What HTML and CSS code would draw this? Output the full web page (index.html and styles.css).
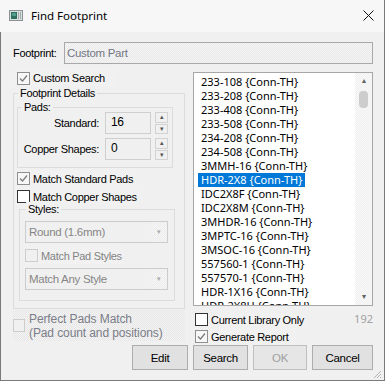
FILE: index.html
```html
<!DOCTYPE html>
<html lang="en">
<head>
<meta charset="UTF-8" />
<title>Find Footprint</title>
<link rel="stylesheet" href="styles.css">
</head>
<body>
<div class="window">
  <div class="titlebar">
    <svg class="app-icon" width="14" height="11" viewBox="0 0 14 11">
      <rect x="0.5" y="0.5" width="13" height="10" fill="#d9dede" stroke="#8c9292"/>
      <rect x="2" y="2" width="6" height="7" fill="#2e6f5e"/>
      <rect x="3" y="3" width="4" height="3" fill="#4f9b8c"/>
      <rect x="9" y="2" width="1" height="7" fill="#a3aaaa"/>
      <rect x="11" y="2" width="1" height="7" fill="#a3aaaa"/>
    </svg>
    <span class="title">Find Footprint</span>
    <svg class="close" width="11" height="11" viewBox="0 0 11 11">
      <path d="M0.5 0.5 L10.5 10.5 M10.5 0.5 L0.5 10.5" stroke="#111" stroke-width="1"/>
    </svg>
  </div>

  <div class="body">
    <div class="fp-row">
      <span class="fp-label">Footprint:</span>
      <div class="field">Custom Part</div>
    </div>

    <div class="columns">
      <div class="left">
        <div class="check-row hatch-light first">
          <span class="cb checked"><svg width="11" height="11" viewBox="0 0 11 11"><path d="M2 5.5 L4.5 8 L9 2.5" fill="none" stroke="#7a7a7a" stroke-width="1.2"/></svg></span>
          <span>Custom Search</span>
        </div>

        <div class="group details">
          <div class="group-title">Footprint Details</div>

          <div class="group pads">
            <div class="group-title">Pads:</div>
            <div class="num-row first">
              <span class="num-label">Standard:</span>
              <div class="num-input">16</div>
              <div class="spin"><span>&#9652;</span><span>&#9662;</span></div>
            </div>
            <div class="num-row">
              <span class="num-label">Copper Shapes:</span>
              <div class="num-input">0</div>
              <div class="spin"><span>&#9652;</span><span>&#9662;</span></div>
            </div>
          </div>

          <div class="check-row hatch-light msp">
            <span class="cb checked"><svg width="11" height="11" viewBox="0 0 11 11"><path d="M2 5.5 L4.5 8 L9 2.5" fill="none" stroke="#7a7a7a" stroke-width="1.2"/></svg></span>
            <span>Match Standard Pads</span>
          </div>
          <div class="check-row hatch-light mcs">
            <span class="cb dark"></span>
            <span>Match Copper Shapes</span>
          </div>

          <div class="group styles">
            <div class="group-title">Styles:</div>
            <div class="combo first">
              <span>Round (1.6mm)</span>
              <span class="combo-arrow">&#9662;</span>
            </div>
            <div class="check-row hatch-light disabled mps">
              <span class="cb off"></span>
              <span>Match Pad Styles</span>
            </div>
            <div class="combo">
              <span>Match Any Style</span>
              <span class="combo-arrow">&#9662;</span>
            </div>
          </div>
        </div>

        <div class="perfect">
          <span class="cb off"></span>
          <span class="perfect-text">Perfect Pads Match<br>(Pad count and positions)</span>
        </div>
      </div>

      <div class="right">
        <div class="list">
          <div class="items">
            <div class="item"><span>233-108 {Conn-TH}</span></div>
            <div class="item"><span>233-208 {Conn-TH}</span></div>
            <div class="item"><span>233-408 {Conn-TH}</span></div>
            <div class="item"><span>233-508 {Conn-TH}</span></div>
            <div class="item"><span>234-208 {Conn-TH}</span></div>
            <div class="item"><span>234-508 {Conn-TH}</span></div>
            <div class="item"><span>3MMH-16 {Conn-TH}</span></div>
            <div class="item selected"><span>HDR-2X8 {Conn-TH}</span></div>
            <div class="item"><span>IDC2X8F {Conn-TH}</span></div>
            <div class="item"><span>IDC2X8M {Conn-TH}</span></div>
            <div class="item"><span>3MHDR-16 {Conn-TH}</span></div>
            <div class="item"><span>3MPTC-16 {Conn-TH}</span></div>
            <div class="item"><span>3MSOC-16 {Conn-TH}</span></div>
            <div class="item"><span>557560-1 {Conn-TH}</span></div>
            <div class="item"><span>557570-1 {Conn-TH}</span></div>
            <div class="item"><span>HDR-1X16 {Conn-TH}</span></div>
            <div class="item"><span>HDR-2X8H {Conn-TH}</span></div>
          </div>
          <div class="scrollbar">
            <span class="arrow">&#9652;</span>
            <span class="thumb"></span>
            <span class="track"></span>
            <span class="arrow">&#9662;</span>
          </div>
        </div>

        <div class="check-row cur">
          <span class="cb dark"></span>
          <span class="cur-label">Current Library Only</span>
          <span class="count">192</span>
        </div>
        <div class="check-row hatch-light gen">
          <span class="cb checked"><svg width="11" height="11" viewBox="0 0 11 11"><path d="M2 5.5 L4.5 8 L9 2.5" fill="none" stroke="#7a7a7a" stroke-width="1.2"/></svg></span>
          <span>Generate Report</span>
        </div>
      </div>
    </div>

    <div class="buttons">
      <button class="btn edit">Edit</button>
      <button class="btn search">Search</button>
      <button class="btn ok" disabled>OK</button>
      <button class="btn cancel">Cancel</button>
    </div>
  </div>

  <svg class="grip" width="9" height="9" viewBox="0 0 9 9">
    <path d="M8 1 L1 8 M8 4 L4 8 M8 7 L7 8" stroke="#b5b5b5" stroke-width="1"/>
  </svg>
</div>
</body>
</html>
```

FILE: styles.css
```css
body {
  margin: 0;
  font-family: "Liberation Sans", Arial, sans-serif;
  font-size: 11px;
  letter-spacing: -0.3px;
  color: #000;
  background: #f0f0f0;
}

.window {
  position: relative;
  width: 385px;
  height: 381px;
  box-sizing: border-box;
  display: flex;
  flex-direction: column;
  border-right: 1px solid #7a7a7a;
}

/* Title bar */
.titlebar {
  height: 32px;
  flex: none;
  display: flex;
  align-items: center;
  padding-left: 9px;
  background: #f7f7f7;
}

.app-icon {
  margin-top: -1px;
}

.title {
  margin-left: 8px;
  font-family: "Noto Sans", sans-serif;
  font-size: 11.5px;
  letter-spacing: 0;
  margin-top: -2px;
}

.close {
  margin-left: auto;
  margin-right: 10px;
  margin-top: -2px;
}

.body {
  flex: 1;
  display: flex;
  flex-direction: column;
  padding: 10px 11px 0 12px;
  border-left: 1px solid #7a7a7a;
  border-bottom: 1px solid #7a7a7a;
}

/* Footprint field */
.fp-row {
  display: flex;
  align-items: center;
  height: 22px;
}

.fp-label {
  width: 51px;
}

.field {
  flex: 1;
  height: 22px;
  box-sizing: border-box;
  border: 1px solid #a9a9a9;
  padding-left: 2px;
  line-height: 20px;
  color: #737784;
  font-size: 11.5px;
  background: repeating-conic-gradient(#e9e9e9 0 25%, #f5f5f5 0 50%) 0 0 / 2px 2px;
}

.columns {
  display: flex;
  gap: 8px;
  margin-top: 6px;
}

.left {
  width: 172px;
  display: flex;
  flex-direction: column;
}

.right {
  width: 180px;
  display: flex;
  flex-direction: column;
}

/* Checkboxes */
.check-row {
  display: flex;
  align-items: center;
  gap: 3px;
  height: 17px;
  width: fit-content;
  padding: 0 2px 0 1px;
  white-space: nowrap;
}

.hatch-light {
  background: repeating-conic-gradient(#eeeeee 0 25%, #f4f4f4 0 50%) 0 0 / 2px 2px;
}

.cb {
  width: 13px;
  height: 13px;
  box-sizing: border-box;
  flex: none;
  display: flex;
  align-items: center;
  justify-content: center;
  border: 1px solid #333;
  background: #fff;
}

.cb.checked {
  border-color: #8f8f8f;
  background: #f7f7f7;
}

.cb.off {
  border-color: #cdcdcd;
  background: #f0f0f0;
}

.check-row.first {
  margin-left: 2px;
  padding-left: 2px;
  width: 100px;
  box-sizing: border-box;
  height: 16px;
}

.disabled {
  color: #838383;
}

/* Group boxes */
.group {
  border: 1px solid #dcdcdc;
  display: flex;
  flex-direction: column;
}

.group-title {
  width: fit-content;
  margin-top: -8px;
  padding: 0 2px;
  line-height: 14px;
  background: #f0f0f0;
}

.details {
  margin-top: 7px;
  padding-bottom: 7px;
}

.details > .group-title {
  margin-left: 4px;
}

.pads {
  margin: 7px 11px 0 3px;
  padding-bottom: 7px;
}

.pads > .group-title {
  margin-left: 4px;
}

.num-row {
  display: flex;
  align-items: center;
  height: 22px;
  margin-top: 4px;
}

.num-row.first {
  margin-top: -2px;
}

.num-label {
  width: 81px;
  text-align: right;
}

.num-input {
  width: 46px;
  height: 22px;
  box-sizing: border-box;
  margin-left: 6px;
  border: 1px solid #cfcfcf;
  padding-left: 5px;
  line-height: 18px;
  font-size: 12px;
}

.spin {
  width: 13px;
  height: 22px;
  margin-left: 4px;
  display: flex;
  flex-direction: column;
  gap: 1px;
}

.spin span {
  flex: 1;
  box-sizing: border-box;
  border: 1px solid #d2d2d2;
  font-size: 7px;
  line-height: 8px;
  text-align: center;
  color: #555;
}

.msp {
  margin: 2px 0 0 2px;
}

.mcs {
  margin: 1px 0 0 2px;
}

.styles {
  margin: 4px 9px 0 5px;
  padding-bottom: 10px;
}

.styles > .group-title {
  margin-left: 6px;
}

.combo {
  display: flex;
  height: 22px;
  width: 143px;
  box-sizing: border-box;
  margin: 4px 0 0 5px;
  border: 1px solid #cccccc;
  color: #868686;
  font-size: 11.5px;
  line-height: 20px;
  padding-left: 3px;
}

.combo.first {
  margin-top: 5px;
}

.combo-arrow {
  margin-left: auto;
  width: 16px;
  font-size: 7px;
  text-align: center;
  color: #a8a8a8;
  background: repeating-conic-gradient(#ececec 0 25%, #f6f6f6 0 50%) 0 0 / 2px 2px;
}

.mps {
  margin: 4px 0 0 5px;
  padding-left: 0;
}

.perfect {
  display: flex;
  align-items: center;
  gap: 4px;
  height: 31px;
  margin-top: 1px;
  color: #7b7d88;
  background: repeating-conic-gradient(#e6e6e6 0 25%, #f4f4f4 0 50%) 0 0 / 2px 2px;
}

.perfect .cb {
  width: 12px;
}

.perfect-text {
  line-height: 14px;
  font-size: 12px;
  letter-spacing: -0.1px;
}

/* Footprint list */
.list {
  display: flex;
  height: 234px;
  margin-top: 2px;
  box-sizing: border-box;
  border: 1px solid #a7a7a7;
  background: #fff;
  overflow: hidden;
}

.items {
  flex: 1;
  padding: 2px 0 0 4px;
  overflow: hidden;
  font-family: "Noto Sans", sans-serif;
  font-size: 11px;
  letter-spacing: 0;
}

.item {
  height: 14px;
  line-height: 14px;
  white-space: nowrap;
}

.item span {
  display: inline-block;
  padding: 0 3px;
}

.item.selected span {
  background: #0078d7;
  color: #fff;
}

.scrollbar {
  width: 17px;
  display: flex;
  flex-direction: column;
  align-items: center;
  background: repeating-conic-gradient(#f0f0f0 0 25%, #f9f9f9 0 50%) 0 0 / 2px 2px;
}

.scrollbar .arrow {
  height: 16px;
  font-size: 8px;
  line-height: 16px;
  color: #606060;
}

.scrollbar .thumb {
  width: 9px;
  height: 17px;
  margin-top: 2px;
  border-radius: 4px;
  background: #cdcdcd;
}

.scrollbar .track {
  flex: 1;
}

.cur {
  width: auto;
  margin: 5px 0 0 2px;
  padding: 0;
}

.cur-label {
  padding-right: 2px;
  background: repeating-conic-gradient(#eeeeee 0 25%, #f4f4f4 0 50%) 0 0 / 2px 2px;
}

.count {
  margin-left: auto;
  margin-top: -3px;
  color: #a2a2a2;
  font-family: "Noto Sans", sans-serif;
  font-size: 11px;
  letter-spacing: 0;
}

.gen {
  margin-left: 2px;
  padding: 0 8px 0 0;
}

/* Buttons */
.buttons {
  display: flex;
  justify-content: flex-end;
  gap: 5px;
}

.btn {
  height: 25px;
  box-sizing: border-box;
  border: 1px solid #adadad;
  background: #e1e1e1;
  font-family: "Liberation Sans", Arial, sans-serif;
  font-size: 11.5px;
  letter-spacing: -0.3px;
  color: #000;
  padding: 0;
}

.btn.edit { width: 56px; }
.btn.search { width: 55px; }
.btn.ok {
  width: 54px;
  color: #a0a0a0;
  border-color: #bfbfbf;
  background: #e6e6e6;
}
.btn.cancel { width: 61px; }

.grip {
  position: absolute;
  right: 2px;
  bottom: 2px;
}
```
